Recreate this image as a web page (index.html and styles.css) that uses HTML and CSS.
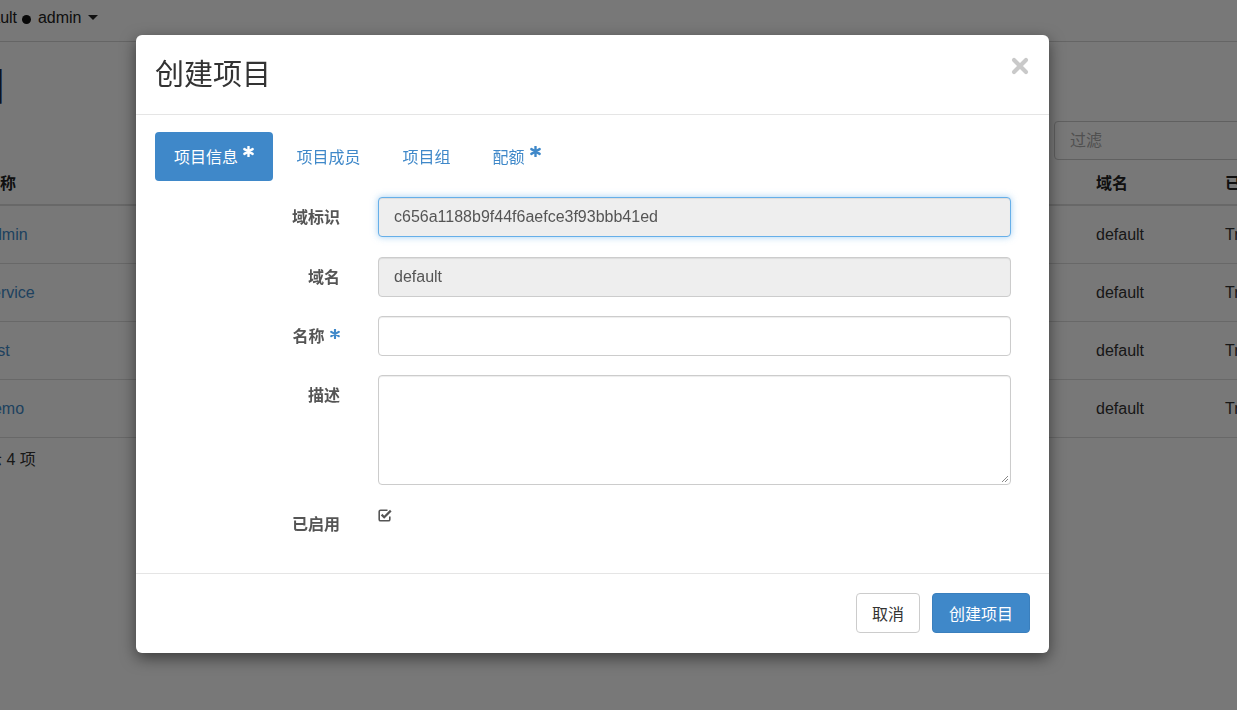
FILE: index.html
```html
<!DOCTYPE html>
<html lang="zh-CN">
<head>
<meta charset="utf-8">
<title>创建项目</title>
<link rel="stylesheet" href="styles.css">
</head>
<body>
<div class="page">
  <div class="topbar">
    <span class="user">default <span class="dot"></span> admin <span class="caret"></span></span>
  </div>
  <div class="page-title"><h1>目</h1></div>
  <div class="toolbar"><div class="filter">过滤</div></div>
  <div class="table">
    <div class="tr head"><div>名称</div><div>域名</div><div>已启用</div></div>
    <div class="tr"><a>admin</a><div>default</div><div>True</div></div>
    <div class="tr"><a>service</a><div>default</div><div>True</div></div>
    <div class="tr"><a>test</a><div>default</div><div>True</div></div>
    <div class="tr"><a>demo</a><div>default</div><div>True</div></div>
  </div>
  <div class="tfoot">正在显示 4 项</div>
</div>

<div class="backdrop"></div>

<div class="modal">
  <div class="modal-header">
    <h3 class="modal-title">创建项目</h3>
    <span class="close">
      <svg width="18" height="18" viewBox="0 0 18 18"><path d="M3 3 L15 15 M15 3 L3 15" stroke="#c9c9c9" stroke-width="4.2" stroke-linecap="round"/></svg>
    </span>
  </div>
  <div class="modal-body">
    <ul class="nav-pills">
      <li class="active">项目信息 <span class="req"><svg width="11" height="11" viewBox="0 0 12 12"><path d="M6 0.8 V11.2 M1.5 3.4 L10.5 8.6 M10.5 3.4 L1.5 8.6" stroke="currentColor" stroke-width="2.6" stroke-linecap="round"/></svg></span></li>
      <li>项目成员</li>
      <li>项目组</li>
      <li>配额 <span class="req"><svg width="11" height="11" viewBox="0 0 12 12"><path d="M6 0.8 V11.2 M1.5 3.4 L10.5 8.6 M10.5 3.4 L1.5 8.6" stroke="currentColor" stroke-width="2.6" stroke-linecap="round"/></svg></span></li>
    </ul>
    <div class="form">
      <div class="row first">
        <label>域标识</label>
        <div class="input disabled focused">c656a1188b9f44f6aefce3f93bbb41ed</div>
      </div>
      <div class="row">
        <label>域名</label>
        <div class="input disabled">default</div>
      </div>
      <div class="row">
        <label>名称 <span class="req small"><svg width="10" height="10" viewBox="0 0 12 12"><path d="M6 0.8 V11.2 M1.5 3.4 L10.5 8.6 M10.5 3.4 L1.5 8.6" stroke="currentColor" stroke-width="2.6" stroke-linecap="round"/></svg></span></label>
        <div class="input"></div>
      </div>
      <div class="row">
        <label>描述</label>
        <div class="input textarea">
          <svg class="grip" width="9" height="9" viewBox="0 0 9 9"><path d="M8 2 L2 8 M8 5 L5 8" stroke="#888" stroke-width="1"/></svg>
        </div>
      </div>
      <div class="row last">
        <label>已启用</label>
        <div class="check">
          <svg width="14" height="13" viewBox="0 0 14 13"><path d="M9.5 1.2 H2.6 Q1.2 1.2 1.2 2.6 V10.4 Q1.2 11.8 2.6 11.8 H10.4 Q11.8 11.8 11.8 10.4 V7.5" fill="none" stroke="#555" stroke-width="1.6"/><path d="M3.6 5.6 L6.2 8.2 L12.8 1.6" fill="none" stroke="#555" stroke-width="2.2"/></svg>
        </div>
      </div>
    </div>
  </div>
  <div class="modal-footer">
    <button class="btn btn-default">取消</button>
    <button class="btn btn-primary">创建项目</button>
  </div>
</div>
</body>
</html>
```
FILE: styles.css
```css
* { box-sizing: border-box; }
html, body { margin: 0; padding: 0; }
body {
  width: 1237px;
  height: 710px;
  overflow: hidden;
  background: #fff;
  font-family: "Liberation Sans", "Noto Sans CJK SC", sans-serif;
  font-size: 16px;
  color: #333;
  position: relative;
}

/* background page */
.page { width: 1400px; }
.topbar {
  height: 42px;
  border-bottom: 1px solid #d6d6d6;
  display: flex;
  align-items: center;
  padding-bottom: 6px;
}
.user {
  margin-left: -31px;
  color: #222;
  white-space: pre;
}
.dot {
  display: inline-block;
  width: 9px; height: 9px;
  border-radius: 50%;
  background: #111;
  margin: 0 2px 0 1px;
  vertical-align: -1px;
}
.caret {
  display: inline-block;
  width: 0; height: 0;
  border-left: 5px solid transparent;
  border-right: 5px solid transparent;
  border-top: 5px solid #222;
  vertical-align: 3px;
  margin-left: 2px;
}
.page-title { height: 79px; }
.page-title h1 {
  margin: 0;
  padding-top: 22px;
  margin-left: -32px;
  font-size: 40px;
  font-weight: normal;
  line-height: 44px;
  color: #1c2a4a;
}
.toolbar { height: 39px; }
.filter {
  margin-left: 1054px;
  width: 300px;
  height: 39px;
  border: 1px solid #ccc;
  border-radius: 4px;
  padding-left: 15px;
  line-height: 37px;
  color: #aaa;
}
.table { margin-left: -16px; }
.tr {
  display: grid;
  grid-template-columns: 1112px 129px 1fr;
  align-items: center;
  height: 58px;
  border-bottom: 1px solid #ddd;
}
.tr.head {
  height: 46px;
  border-bottom: 2px solid #ddd;
  font-weight: bold;
  color: #222;
}
.tr a { color: #428bca; }
.tfoot {
  margin-left: -62px;
  padding-top: 11px;
  line-height: 22px;
  white-space: pre;
}

/* overlay */
.backdrop {
  position: fixed;
  inset: 0;
  background: rgba(0, 0, 0, 0.53);
}

.modal {
  position: absolute;
  left: 136px;
  top: 35px;
  width: 913px;
  background: #fff;
  border-radius: 6px;
  box-shadow: 0 5px 15px rgba(0, 0, 0, 0.5);
}
.modal-header {
  height: 80px;
  border-bottom: 1px solid #e5e5e5;
  display: flex;
  align-items: center;
  justify-content: space-between;
  padding: 0 19px 6px 19px;
}
.modal-title {
  margin: 0;
  font-size: 29px;
  font-weight: normal;
  color: #333;
}
.close {
  display: flex;
  margin-top: -12px;
  margin-right: 1px;
}
.modal-body {
  padding: 17px 19px 17px 19px;
}
.nav-pills {
  list-style: none;
  margin: 0;
  padding: 0;
  display: flex;
  gap: 4px;
}
.nav-pills li {
  height: 49px;
  padding: 0 19px;
  display: flex;
  align-items: center;
  color: #3f88c9;
  border-radius: 4px;
  white-space: pre;
  padding-bottom: 1px;
}
.nav-pills li.active {
  background: #3f88c9;
  color: #fff;
}
.req {
  display: inline-flex;
  align-self: flex-start;
  margin-top: 14px;
  margin-left: 1px;
}
.req.small {
  align-self: auto;
  margin-top: -6px;
  color: #3f88c9;
}
.nav-pills li:not(.active) .req { color: #3f88c9; }

.form {
  margin-top: 16px;
  padding-right: 19px;
}
.row {
  display: grid;
  grid-template-columns: 185px 1fr;
  column-gap: 38px;
  margin-bottom: 19px;
}
.row.first { margin-bottom: 20px; }
.row.last { margin-bottom: 12px; }
.row label {
  padding-top: 2px;
  line-height: 22px;
  color: #555;
  font-weight: bold;
  display: flex;
  justify-content: flex-end;
  align-items: center;
  height: 40px;
  white-space: pre;
}
.input {
  height: 40px;
  border: 1px solid #ccc;
  border-radius: 4px;
  padding: 0 15px;
  line-height: 38px;
  color: #555;
  background: #fff;
  box-shadow: inset 0 1px 1px rgba(0, 0, 0, 0.075);
}
.input.disabled { background: #eee; }
.input.focused {
  border-color: #66afe9;
  box-shadow: inset 0 1px 1px rgba(0, 0, 0, 0.075), 0 0 7px rgba(102, 175, 233, 0.6);
}
.input.textarea {
  height: 110px;
  position: relative;
}
.grip {
  position: absolute;
  right: 1px;
  bottom: 1px;
}
.check {
  padding-top: 4px;
  height: 40px;
}

.modal-footer {
  border-top: 1px solid #e5e5e5;
  padding: 19px 19px 20px;
  display: flex;
  justify-content: flex-end;
  gap: 12px;
}
.btn {
  height: 40px;
  padding: 0 15px;
  border-radius: 4px;
  font-family: "Liberation Sans", "Noto Sans CJK SC", sans-serif;
  font-size: 16px;
  border: 1px solid #ccc;
  background: #fff;
  color: #333;
}
.btn-primary {
  padding: 0 16px;
  background: #3f88c9;
  border-color: #3a7fbd;
  color: #fff;
}
```
